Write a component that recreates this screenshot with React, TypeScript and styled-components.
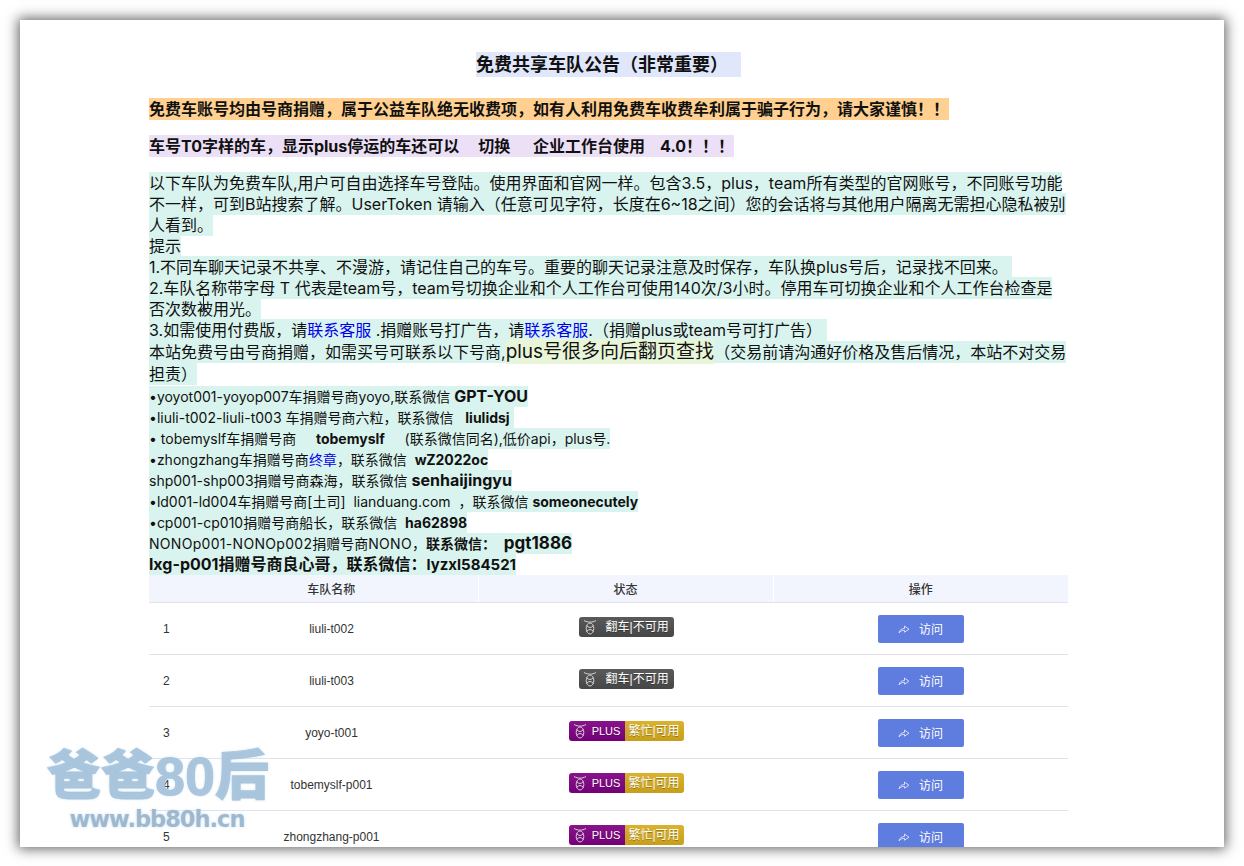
import React from 'react'
import styled, { createGlobalStyle } from 'styled-components'

const GlobalStyle = createGlobalStyle`
  html, body {
    margin: 0;
    padding: 0;
    background: #fff;
  }
  body {
    height: 866px;
    overflow: hidden;
    font-family: Inter, 'Noto Sans CJK SC', sans-serif;
  }
`

const Stage = styled.div`
  position: relative;
  height: 866px;
  padding: 20px 20px 19px;
  box-sizing: border-box;
  overflow: hidden;
`

const Sheet = styled.div`
  height: 827px;
  padding: 32px 156px 0 129px;
  box-sizing: border-box;
  background: #fff;
  box-shadow: 0 0 12px 2px rgba(0, 0, 0, 0.6);
  overflow: hidden;
  color: #111;
`

const Title = styled.h2`
  margin: 0 0 22px;
  text-align: center;
  font-size: 18px;
  line-height: 25px;
  font-weight: 700;
  span {
    padding: 2px 0;
    background: #e0e7fb;
  }
`

const Lead = styled.p<{ $bg: string }>`
  margin: 0 0 16px;
  font-size: 16px;
  line-height: 21px;
  font-weight: 700;
  span {
    padding: 1px 0;
    background: ${(p) => p.$bg};
  }
`

const Notes = styled.div`
  font-size: 16px;
  line-height: 21px;
`

const Line = styled.div<{ $small?: boolean; $height?: number; $gap?: number }>`
  font-size: ${(p) => (p.$small ? '14px' : '16px')};
  line-height: ${(p) => p.$height ?? 21}px;
  margin-bottom: ${(p) => p.$gap ?? 0}px;
  > span {
    padding: ${(p) => (p.$small ? '2px' : '1px')} 0;
    background: #d9f4ee;
  }
`

const Link = styled.a`
  color: #0000ee;
`

const Big = styled.b<{ $size?: number }>`
  font-size: ${(p) => p.$size ?? 16}px;
  font-weight: 700;
`

const Tinted = styled.span`
  padding: 1px 0;
  font-size: 19px;
  background: #e8f5d8;
`

const Wide = styled.span`
  letter-spacing: 0.3px;
`

const Table = styled.table`
  width: 919px;
  table-layout: fixed;
  border-collapse: collapse;
  font-family: 'Liberation Sans', 'Noto Sans CJK SC', sans-serif;
  font-size: 12px;
  color: #333;
`

const Th = styled.th`
  height: 27px;
  padding: 0;
  background: #f2f5fd;
  border-bottom: 1px solid #e2e2ea;
  border-right: 1px solid #fff;
  font-size: 12px;
  font-weight: 500;
  color: #333;
  &:first-child {
    padding-left: 36px;
  }
  &:last-child {
    border-right: 0;
  }
`

const Row = styled.tr`
  height: 52px;
  border-bottom: 1px solid #e2e2ea;
`

const Td = styled.td<{ $pad?: boolean }>`
  padding: 0 0 0 ${(p) => (p.$pad ? '14px' : '0')};
  text-align: ${(p) => (p.$pad ? 'left' : 'center')};
`

const Badge = styled.span`
  display: inline-flex;
  height: 20px;
  margin: 0 0 4px 1px;
  vertical-align: middle;
  border-radius: 3px;
  overflow: hidden;
  font-size: 12px;
  line-height: 20px;
  color: #fff;
  text-shadow: 0 1px 0 rgba(0, 0, 0, 0.3);
`

const BadgePart = styled.span<{ $bg: string; $w: number }>`
  display: flex;
  align-items: center;
  justify-content: center;
  gap: 5px;
  width: ${(p) => p.$w}px;
  background: ${(p) => p.$bg};
  background-image: linear-gradient(rgba(255, 255, 255, 0.08), rgba(0, 0, 0, 0.08));
`

const PlusLabel = styled.span`
  font-size: 11px;
`

const Visit = styled.button`
  display: inline-flex;
  align-items: center;
  justify-content: center;
  gap: 9px;
  width: 86px;
  height: 28px;
  padding: 0;
  border: 0;
  border-radius: 2px;
  background: #5f7ddf;
  color: #fff;
  font-family: inherit;
  font-size: 12px;
`

const Watermark = styled.div`
  position: absolute;
  left: 47px;
  top: 743px;
  width: 220px;
  text-align: center;
  color: rgba(160, 190, 214, 0.78);
  font-family: 'Liberation Sans', 'Noto Sans CJK SC', sans-serif;
  font-weight: 900;
  text-shadow: 0 0 3px rgba(190, 220, 245, 0.9);
  pointer-events: none;
`

const MarkBig = styled.div`
  font-size: 54px;
  line-height: 66px;
  white-space: nowrap;
  -webkit-text-stroke: 0.8px rgba(160, 190, 214, 0.78);
`

const MarkSmall = styled.div`
  margin-top: -4px;
  font-size: 22.5px;
  line-height: 28px;
  font-family: 'DejaVu Sans', sans-serif;
  letter-spacing: -1px;
  color: rgba(150, 176, 198, 0.85);
`

const Caret = styled.svg`
  position: absolute;
  left: 199px;
  top: 295px;
`

const BotIcon = () => (
  <svg width="14" height="16" viewBox="0 0 14 16" fill="none" stroke="#d4d4d4" strokeWidth="1">
    <path d="M1 1.500c2 1.200 4 1.600 6 1.600s4-.4 6-1.600" />
    <ellipse cx="7" cy="9.500" rx="3.800" ry="5.500" />
    <path d="M3.500 6.500Q7 10.500 10.500 6.500M3.500 12.500Q7 8.500 10.500 12.500" />
  </svg>
)

const ShareIcon = () => (
  <svg width="12" height="10" viewBox="0 0 12 10" fill="none" stroke="#d6dcf8" strokeWidth="1">
    <path d="M1 9c.4-3 2.600-4.500 5.500-4.500V2L11 5.300 6.500 8.200V6.300C4.500 6.300 2.500 7 1 9z" />
  </svg>
)

const teams = [
  { name: 'liuli-t002', plus: false },
  { name: 'liuli-t003', plus: false },
  { name: 'yoyo-t001', plus: true },
  { name: 'tobemyslf-p001', plus: true },
  { name: 'zhongzhang-p001', plus: true },
]

export default function App() {
  return (
    <Stage lang="zh-CN">
      <GlobalStyle />
      <Sheet>
        <Title>
          <span>免费共享车队公告（非常重要）&nbsp;&nbsp;&nbsp;</span>
        </Title>
        <Lead $bg="#ffd08f">
          <span>免费车账号均由号商捐赠，属于公益车队绝无收费项，如有人利用免费车收费牟利属于骗子行为，请大家谨慎！！</span>
        </Lead>
        <Lead $bg="#ece0f7">
          <span>车号T0字样的车，显示plus停运的车还可以&nbsp;&nbsp;&nbsp;&nbsp;&nbsp;切换&nbsp;&nbsp;&nbsp;&nbsp;&nbsp;&nbsp;企业工作台使用&nbsp;&nbsp;&nbsp;&nbsp;4.0！！！</span>
        </Lead>
        <Notes>
          <Line>
            <span>以下车队为免费车队,用户可自由选择车号登陆。使用界面和官网一样。包含3.5，plus，team所有类型的官网账号，不同账号功能不一样，可到B站搜索了解。UserToken 请输入（任意可见字符，长度在6~18之间）您的会话将与其他用户隔离无需担心隐私被别人看到。</span>
          </Line>
          <Line><span>提示</span></Line>
          <Line><span>1.不同车聊天记录不共享、不漫游，请记住自己的车号。重要的聊天记录注意及时保存，车队换plus号后，记录找不回来。&nbsp;</span></Line>
          <Line><span>2.车队名称带字母 T 代表是team号，team号切换企业和个人工作台可使用140次/3小时。停用车可切换企业和个人工作台检查是否次数被用光。</span></Line>
          <Line>
            <span>3.如需使用付费版，请<Link>联系客服</Link> .捐赠账号打广告，请<Link>联系客服</Link>.（捐赠plus或team号可打广告）&nbsp;</span>
          </Line>
          <Line $height={22} $gap={1}>
            <span>本站免费号由号商捐赠，如需买号可联系以下号商,<Tinted>plus号很多向后翻页查找</Tinted>（交易前请沟通好价格及售后情况，本站不对交易担责）</span>
          </Line>
          <Line $small><span>•yoyot001-yoyop007车捐赠号商yoyo,联系微信 <Big>GPT-YOU</Big></span></Line>
          <Line $small><span>•liuli-t002-liuli-t003 车捐赠号商六粒，联系微信&nbsp;&nbsp;&nbsp;<Big $size={14}>liulidsj</Big>&nbsp;</span></Line>
          <Line $small><span>• tobemyslf车捐赠号商&nbsp;&nbsp;&nbsp;&nbsp;&nbsp;<Big $size={14}>tobemyslf</Big>&nbsp;&nbsp;&nbsp;&nbsp;&nbsp;(联系微信同名),低价api，plus号.</span></Line>
          <Line $small><span>•zhongzhang车捐赠号商<Link>终章</Link>，联系微信&nbsp;&nbsp;<Big $size={14}>wZ2022oc</Big></span></Line>
          <Line $small><span>shp001-shp003捐赠号商森海，联系微信 <Big>senhaijingyu</Big></span></Line>
          <Line $small><span>•ld001-ld004车捐赠号商[土司]&nbsp;&nbsp;lianduang.com&nbsp;&nbsp;，联系微信 <Big $size={14}>someonecutely</Big></span></Line>
          <Line $small><span>•cp001-cp010捐赠号商船长，联系微信&nbsp;&nbsp;<Big $size={14}>ha62898</Big></span></Line>
          <Line $small><span><Wide>NONOp001-NONOp002</Wide>捐赠号商<Wide>NONO</Wide>，<Big $size={14}>联系微信：</Big>&nbsp;&nbsp;<Big $size={17}>pgt1886</Big></span></Line>
          <Line $height={20}><span><Big>lxg-p001捐赠号商良心哥，联系微信：</Big><Big $size={15}>lyzxl584521</Big></span></Line>
        </Notes>
        <Table>
          <colgroup>
            <col style={{ width: 36 }} />
            <col style={{ width: 293 }} />
            <col style={{ width: 295 }} />
            <col style={{ width: 295 }} />
          </colgroup>
          <thead>
            <tr>
              <Th colSpan={2}>车队名称</Th>
              <Th>状态</Th>
              <Th>操作</Th>
            </tr>
          </thead>
          <tbody>
            {teams.map((team, i) => (
              <Row key={team.name}>
                <Td $pad>{i + 1}</Td>
                <Td>{team.name}</Td>
                <Td>
                  {team.plus ? (
                    <Badge>
                      <BadgePart $bg="#7d0080" $w={56}>
                        <BotIcon />
                        <PlusLabel>PLUS</PlusLabel>
                      </BadgePart>
                      <BadgePart $bg="#d8ac1c" $w={59}>繁忙|可用</BadgePart>
                    </Badge>
                  ) : (
                    <Badge>
                      <BadgePart $bg="#4c4c4c" $w={95}>
                        <BotIcon />
                        &nbsp;翻车|不可用
                      </BadgePart>
                    </Badge>
                  )}
                </Td>
                <Td>
                  <Visit>
                    <ShareIcon />
                    访问
                  </Visit>
                </Td>
              </Row>
            ))}
          </tbody>
        </Table>
      </Sheet>
      <Watermark>
        <MarkBig>爸爸80后</MarkBig>
        <MarkSmall>www.bb80h.cn</MarkSmall>
      </Watermark>
      <Caret width="9" height="17" viewBox="0 0 9 17" fill="none" stroke="#222" strokeWidth="1">
        <path d="M1 .5h2.500l1 1 1-1H8M4.500 1.500v14M1 16.500h2.500l1-1 1 1H8" />
      </Caret>
    </Stage>
  )
}
